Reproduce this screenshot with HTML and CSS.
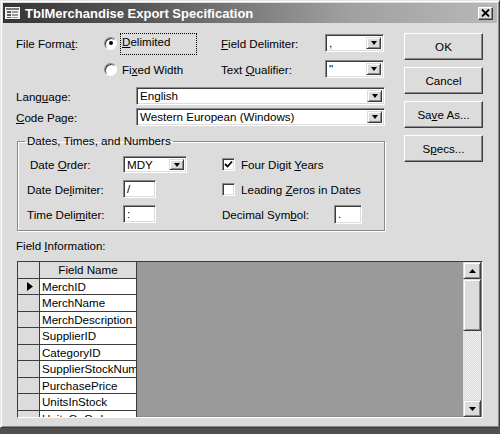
FILE: index.html
```html
<!DOCTYPE html>
<html>
<head>
<meta charset="utf-8">
<title>TblMerchandise Export Specification</title>
<link rel="stylesheet" href="styles.css">
</head>
<body>
<div class="window">
  <div class="titlebar">
    <svg class="ticon" width="15" height="12" viewBox="0 0 15 12">
      <rect x="0" y="0" width="15" height="12" fill="#f4f4f4"/>
      <rect x="1" y="1" width="13" height="2" fill="#7a7a7a"/>
      <rect x="2" y="4" width="4" height="2" fill="#5a5a5a"/>
      <rect x="7" y="4" width="6" height="2" fill="#9a9a9a"/>
      <rect x="2" y="7" width="4" height="2" fill="#5a5a5a"/>
      <rect x="7" y="7" width="6" height="2" fill="#9a9a9a"/>
      <rect x="2" y="10" width="4" height="1" fill="#5a5a5a"/>
      <rect x="7" y="10" width="6" height="1" fill="#9a9a9a"/>
    </svg>
    <span class="title">TblMerchandise Export Specification</span>
    <span class="close"><svg width="9" height="8" viewBox="0 0 9 8"><path d="M1 0.5 L8 7.5 M8 0.5 L1 7.5" stroke="#000" stroke-width="1.8"/></svg></span>
  </div>

  <div class="client">
    <div class="top">
      <div class="left">
        <div class="fmt">
          <span class="lbl">File Forma<u>t</u>:</span>
          <span class="opt"><span class="radio on"></span><span class="focus"><u>D</u>elimited</span></span>
          <span class="lbl"><u>F</u>ield Delimiter:</span>
          <span class="combo small"><span class="val">,</span><span class="dd"></span></span>

          <span></span>
          <span class="opt"><span class="radio"></span><span class="optlbl">Fi<u>x</u>ed Width</span></span>
          <span class="lbl">Text <u>Q</u>ualifier:</span>
          <span class="combo small"><span class="val">"</span><span class="dd"></span></span>
        </div>

        <div class="lang">
          <span class="lbl">Lang<u>u</u>age:</span>
          <span class="combo"><span class="val">English</span><span class="dd"></span></span>
          <span class="lbl"><u>C</u>ode Page:</span>
          <span class="combo"><span class="val">Western European (Windows)</span><span class="dd"></span></span>
        </div>

        <fieldset class="group">
          <legend>Dates, Times, and Numbers</legend>
          <div class="dates">
            <span class="lbl ind">Date <u>O</u>rder:</span>
            <span class="combo order"><span class="val">MDY</span><span class="dd"></span></span>
            <span class="chk"><span class="box"><svg width="9" height="9" viewBox="0 0 9 9"><path d="M1 4 L3.5 6.5 L8 1.5" fill="none" stroke="#000" stroke-width="1.8"/></svg></span><span>Four Digit <u>Y</u>ears</span></span>

            <span class="lbl">Date De<u>l</u>imiter:</span>
            <span class="text short"><span class="val">/</span></span>
            <span class="chk"><span class="box"></span><span>Leading <u>Z</u>eros in Dates</span></span>

            <span class="lbl">Time Deli<u>m</u>iter:</span>
            <span class="text short"><span class="val">:</span></span>
            <span class="lbl">Decimal Sym<u>b</u>ol:</span>
            <span class="text dec"><span class="val">.</span></span>
          </div>
        </fieldset>
      </div>

      <div class="buttons">
        <button class="btn">OK</button>
        <button class="btn">Cancel</button>
        <button class="btn">Sa<u>v</u>e As...</button>
        <button class="btn">S<u>p</u>ecs...</button>
      </div>
    </div>

    <div class="fieldinfo">Field <u>I</u>nformation:</div>

    <div class="datagrid">
      <div class="table">
        <div class="sel head"></div><div class="cell head">Field Name</div>
        <div class="sel"><svg width="6" height="9" viewBox="0 0 6 9"><path d="M0 0 L6 4.5 L0 9 Z" fill="#000"/></svg></div><div class="cell">MerchID</div>
        <div class="sel"></div><div class="cell">MerchName</div>
        <div class="sel"></div><div class="cell">MerchDescription</div>
        <div class="sel"></div><div class="cell">SupplierID</div>
        <div class="sel"></div><div class="cell">CategoryID</div>
        <div class="sel"></div><div class="cell">SupplierStockNumber</div>
        <div class="sel"></div><div class="cell">PurchasePrice</div>
        <div class="sel"></div><div class="cell">UnitsInStock</div>
        <div class="sel"></div><div class="cell">UnitsOnOrder</div>
      </div>
      <div class="empty"></div>
      <div class="vscroll">
        <span class="sbtn"><svg width="7" height="4" viewBox="0 0 7 4"><path d="M3.5 0 L7 4 L0 4 Z" fill="#000"/></svg></span>
        <span class="thumb"></span>
        <span class="track"></span>
        <span class="sbtn"><svg width="7" height="4" viewBox="0 0 7 4"><path d="M0 0 L7 0 L3.5 4 Z" fill="#000"/></svg></span>
      </div>
    </div>
  </div>
</div>
</body>
</html>
```

FILE: styles.css
```css
* { box-sizing: border-box; }
html, body { margin: 0; padding: 0; }
body {
  width: 500px;
  height: 434px;
  overflow: hidden;
  background: #505050;
  font-family: "Liberation Sans", Arial, sans-serif;
  font-size: 11.6px;
  color: #000;
}
u { text-decoration: underline; text-underline-offset: 1px; }

.window {
  width: 500px;
  height: 428px;
  background: #dcdcdc;
  border: 1px solid #e4e4e4;
  border-right-color: #3c3c3c;
  border-bottom-color: #3c3c3c;
  box-shadow: inset 1px 1px #fff, inset -1px -1px #8a8a8a;
  padding: 2px;
  display: flex;
  flex-direction: column;
}

.titlebar {
  height: 20px;
  flex: none;
  display: flex;
  align-items: center;
  padding: 0 4px 0 2px;
  background: linear-gradient(to right, #353535 0%, #5a5a5a 30%, #a0a0a0 70%, #b8b8b8 100%);
  color: #fff;
  font-weight: bold;
  font-size: 13px;
}
.ticon { flex: none; margin-right: 5px; }
.title { flex: 1; white-space: nowrap; }
.close {
  width: 15px;
  height: 13px;
  background: #dcdcdc;
  border: 1px solid;
  border-color: #fff #3c3c3c #3c3c3c #fff;
  box-shadow: inset -1px -1px #8a8a8a;
  display: flex;
  align-items: center;
  justify-content: center;
}

.client {
  flex: 1;
  padding: 11px 0 0 13px;
}
.top { display: flex; }
.left { width: 369px; }

.lbl { white-space: nowrap; }

.fmt {
  display: grid;
  grid-template-columns: 88px 117px 104px 59px;
  grid-template-rows: 18px 18px;
  row-gap: 8px;
  align-items: center;
}
.opt { display: flex; align-items: center; }
.radio {
  flex: none;
  width: 13px;
  height: 13px;
  border-radius: 50%;
  background: #fff;
  border: 1px solid;
  border-color: #8a8a8a #fff #fff #8a8a8a;
  box-shadow: inset 1px 1px #3c3c3c;
  margin-right: 3px;
  display: flex;
  align-items: center;
  justify-content: center;
}
.radio.on::after {
  content: "";
  width: 4px;
  height: 4px;
  border-radius: 50%;
  background: #000;
}
.focus {
  width: 77px;
  height: 22px;
  border: 1px dotted #000;
  line-height: 16px;
  padding-left: 1px;
  align-self: flex-start;
  margin-top: 1px;
}
.optlbl { padding-left: 2px; }

.combo, .text {
  display: flex;
  align-items: stretch;
  height: 18px;
  background: #fff;
  border: 1px solid;
  border-color: #8a8a8a #fff #fff #8a8a8a;
  box-shadow: inset 1px 1px #3c3c3c, inset -1px -1px #dcdcdc;
  padding: 2px;
}
.val {
  flex: 1;
  line-height: 14px;
  margin: -1px 0;
  padding-left: 1px;
  white-space: nowrap;
}
.dd {
  flex: none;
  width: 15px;
  background: #dcdcdc;
  border: 1px solid;
  border-color: #dcdcdc #3c3c3c #3c3c3c #dcdcdc;
  box-shadow: inset 1px 1px #fff, inset -1px -1px #8a8a8a;
  display: flex;
  align-items: center;
  justify-content: center;
}
.dd::after {
  content: "";
  border-left: 3.5px solid transparent;
  border-right: 3.5px solid transparent;
  border-top: 4px solid #000;
}
.combo.small { width: 59px; }

.lang {
  display: grid;
  grid-template-columns: 120px 249px;
  grid-template-rows: 18px 18px;
  row-gap: 3px;
  align-items: center;
  margin-top: 9px;
}

.group {
  margin: 8px 0 0 1px;
  width: 368px;
  border: 1px solid #8a8a8a;
  box-shadow: 1px 1px #fff, inset 1px 1px #fff;
  padding: 8px 0 7px 7px;
}
.group legend {
  padding: 0 2px;
  line-height: 14px;
  margin-left: 0;
}
.dates {
  margin-left: 2px;
  display: grid;
  grid-template-columns: 96px 99px 112px 27px;
  grid-template-rows: 17px 18px 18px;
  row-gap: 7px;
  align-items: center;
}
.ind { padding-left: 3px; }
.combo.order { width: 64px; height: 17px; }
.text.short { width: 33px; }
.text.dec { width: 28px; height: 19px; }
.chk {
  grid-column: span 2;
  display: flex;
  align-items: center;
  white-space: nowrap;
}
.box {
  flex: none;
  width: 13px;
  height: 13px;
  background: #fff;
  border: 1px solid;
  border-color: #8a8a8a #fff #fff #8a8a8a;
  box-shadow: inset 1px 1px #3c3c3c, inset -1px -1px #dcdcdc;
  margin-right: 6px;
  display: flex;
  align-items: center;
  justify-content: center;
}

.buttons {
  margin-left: 19px;
  margin-top: -1px;
  display: flex;
  flex-direction: column;
  gap: 7px;
}
.btn {
  width: 79px;
  height: 27px;
  font: inherit;
  color: #000;
  background: #dcdcdc;
  border: 1px solid;
  border-color: #fff #3c3c3c #3c3c3c #fff;
  box-shadow: inset -1px -1px #8a8a8a;
  padding: 0;
}

.fieldinfo {
  margin-top: 6px;
  line-height: 18px;
}

.datagrid {
  margin: 6px 0 0 1px;
  width: 466px;
  height: 157px;
  display: flex;
  border: 1px solid;
  border-color: #3c3c3c #fff #fff #3c3c3c;
  box-shadow: inset -1px -1px #8a8a8a;
  background: #9a9a9a;
  overflow: hidden;
}
.table {
  flex: none;
  width: 119px;
  display: grid;
  grid-template-columns: 22px 97px;
  grid-auto-rows: 16.5px;
  align-content: start;
}
.sel, .cell {
  border-right: 1px solid #3c3c3c;
  border-bottom: 1px solid #3c3c3c;
}
.sel {
  background: #dcdcdc;
  display: flex;
  align-items: center;
  padding-left: 9px;
}
.cell {
  background: #fff;
  padding-left: 2px;
  line-height: 15px;
  white-space: nowrap;
  overflow: hidden;
}
.cell.head {
  background: #dcdcdc;
  text-align: center;
  padding-left: 0;
}
.empty { flex: 1; }
.vscroll {
  flex: none;
  width: 18px;
  margin-right: 1px;
  display: flex;
  flex-direction: column;
  background: repeating-conic-gradient(#f0f0f0 0 25%, #dcdcdc 0 50%) 0 0 / 2px 2px;
}
.sbtn, .thumb {
  flex: none;
  background: #dcdcdc;
  border: 1px solid;
  border-color: #dcdcdc #3c3c3c #3c3c3c #dcdcdc;
  box-shadow: inset 1px 1px #fff, inset -1px -1px #8a8a8a;
}
.sbtn {
  height: 17px;
  display: flex;
  align-items: center;
  justify-content: center;
}
.thumb { height: 52px; }
.track { flex: 1; }
```
